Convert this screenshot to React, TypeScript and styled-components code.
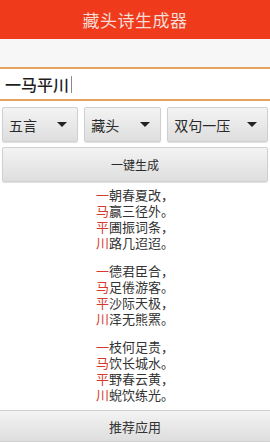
import { FC } from "react";
import styled, { createGlobalStyle } from "styled-components";

const GlobalStyle = createGlobalStyle`
    html, body {
        margin: 0;
        padding: 0;
        background: #ffffff;
        font-family: "Noto Sans CJK SC", "Liberation Sans", sans-serif;
    }
`;

const poems: string[][] = [
    ["一朝春夏改，", "马赢三径外。", "平圃振词条，", "川路几迢迢。"],
    ["一德君臣合，", "马足倦游客。", "平沙际天极，", "川泽无熊罴。"],
    ["一枝何足贵，", "马饮长城水。", "平野春云黄，", "川蜺饮练光。"],
];

const spinners = [
    { label: "五言", grow: 74 },
    { label: "藏头", grow: 75 },
    { label: "双句一压", grow: 105 },
];

export const Spinner: FC<{ label: string; grow: number }> = ({ label, grow }) => (
    <SpinnerBox $grow={grow}>
        <span>{label}</span>
        <Arrow />
    </SpinnerBox>
);

const App: FC = () => {
    return (
        <Page>
            <GlobalStyle />
            <Header>藏头诗生成器</Header>
            <Gap />
            <InputBox>
                一马平川<Caret />
            </InputBox>
            <SpinnerRow>
                {spinners.map((s) => (
                    <Spinner key={s.label} label={s.label} grow={s.grow} />
                ))}
            </SpinnerRow>
            <GenerateButton>一键生成</GenerateButton>
            <PoemArea>
                {poems.map((poem, i) => (
                    <Poem key={i}>
                        {poem.map((line) => (
                            <Line key={line}>
                                <Head>{line[0]}</Head>
                                {line.slice(1)}
                            </Line>
                        ))}
                    </Poem>
                ))}
            </PoemArea>
            <BottomButton>推荐应用</BottomButton>
        </Page>
    );
};

export default App;

const Page = styled.div`
    width: 270px;
    height: 442px;
    display: flex;
    flex-direction: column;
    background: #ffffff;
    overflow: hidden;
`;

const Header = styled.div`
    height: 39px;
    flex: none;
    background: #ef3b1c;
    color: #f7dcd4;
    font-size: 17px;
    display: flex;
    align-items: center;
    justify-content: center;
    letter-spacing: 0.5px;
`;

const Gap = styled.div`
    height: 28px;
    flex: none;
    background: #f7f7f7;
`;

const InputBox = styled.div`
    height: 30px;
    flex: none;
    border-top: 2px solid #e6a35c;
    border-bottom: 2px solid #e6a35c;
    background: #ffffff;
    display: flex;
    align-items: center;
    padding-left: 5px;
    font-size: 16px;
    font-weight: 500;
    color: #1e1e1e;
`;

const Caret = styled.span`
    display: inline-block;
    width: 1px;
    height: 17px;
    margin-left: 2px;
    background: #8a8a8a;
`;

const SpinnerRow = styled.div`
    display: flex;
    gap: 6px;
    padding: 6px 2px 0;
    flex: none;
`;

const ButtonBase = styled.div`
    box-sizing: border-box;
    background: linear-gradient(#f3f3f3, #dedede);
    border: 1px solid #d0d0d0;
    border-radius: 2px;
    box-shadow: 0 1px 1px rgba(0, 0, 0, 0.12);
    color: #2a2a2a;
`;

const SpinnerBox = styled(ButtonBase)<{ $grow: number }>`
    flex: ${(p) => p.$grow} 1 0;
    height: 35px;
    display: flex;
    align-items: center;
    justify-content: space-between;
    padding: 0 10px 0 6px;
    font-size: 14px;
`;

const Arrow = styled.span`
    width: 0;
    height: 0;
    border-left: 5px solid transparent;
    border-right: 5px solid transparent;
    border-top: 5px solid #222;
`;

const GenerateButton = styled(ButtonBase)`
    margin: 5px 2px 0;
    height: 35px;
    flex: none;
    display: flex;
    align-items: center;
    justify-content: center;
    font-size: 12px;
`;

const PoemArea = styled.div`
    flex: 1;
    display: flex;
    flex-direction: column;
    align-items: center;
    gap: 12px;
    padding-top: 5px;
`;

const Poem = styled.div`
    display: flex;
    flex-direction: column;
`;

const Line = styled.div`
    font-size: 13px;
    line-height: 16px;
    color: #333;
    white-space: nowrap;
`;

const Head = styled.span`
    color: #d43a2e;
`;

const BottomButton = styled(ButtonBase)`
    height: 32px;
    flex: none;
    border-left: none;
    border-right: none;
    border-radius: 0;
    display: flex;
    align-items: center;
    justify-content: center;
    font-size: 13px;
    color: #333;
`;
